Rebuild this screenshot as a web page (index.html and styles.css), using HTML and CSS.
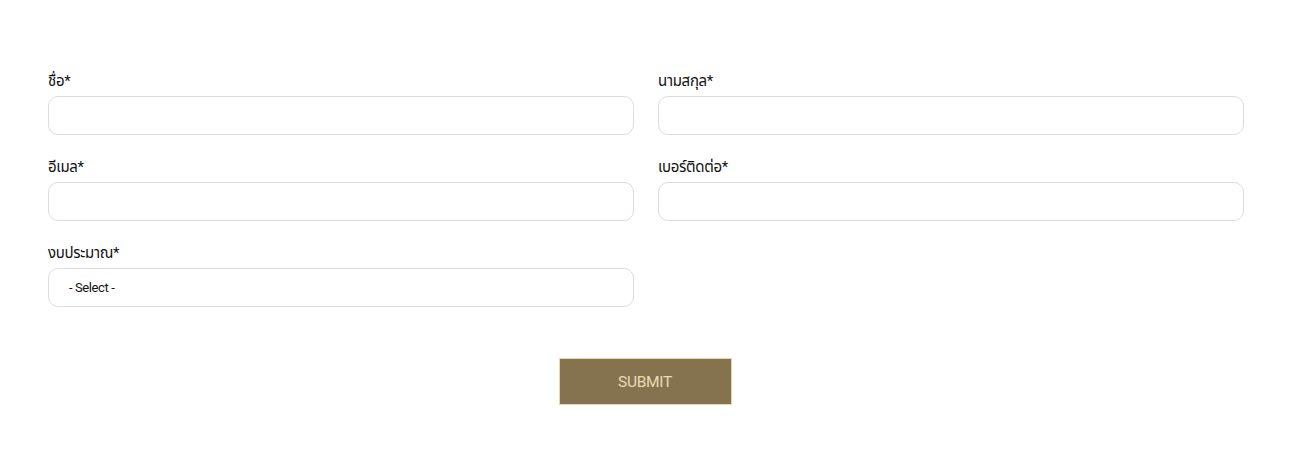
FILE: index.html
```html
<!DOCTYPE html>
<html lang="th">
<head>
<meta charset="utf-8">
<link rel="stylesheet" href="styles.css">
</head>
<body>
<form class="form">
  <div class="grid">
    <div class="field">
      <label class="label">ชื่อ*</label>
      <input class="input" type="text">
    </div>
    <div class="field">
      <label class="label">นามสกุล*</label>
      <input class="input" type="text">
    </div>
    <div class="field">
      <label class="label">อีเมล*</label>
      <input class="input" type="text">
    </div>
    <div class="field">
      <label class="label">เบอร์ติดต่อ*</label>
      <input class="input" type="text">
    </div>
    <div class="field">
      <label class="label">งบประมาณ*</label>
      <div class="select">- Select -</div>
    </div>
  </div>
  <div class="actions">
    <button class="submit" type="button">SUBMIT</button>
  </div>
</form>
</body>
</html>
```
FILE: styles.css
```css
html, body {
  margin: 0;
  padding: 0;
  background: #ffffff;
}
body {
  font-family: Roboto, "Noto Sans Thai", "Noto Sans", "DejaVu Sans", sans-serif;
  color: #111;
}
.form {
  padding: 68px 47px 0 48px;
}
.grid {
  display: grid;
  grid-template-columns: 1fr 1fr;
  column-gap: 24px;
  row-gap: 19px;
}
.field {
  display: flex;
  flex-direction: column;
  gap: 5px;
}
.label {
  font-size: 15px;
  line-height: 20px;
  height: 20px;
  padding-top: 3px;
  letter-spacing: -0.3px;
  color: #111;
}
.input, .select {
  box-sizing: border-box;
  height: 39px;
  width: 100%;
  border: 1px solid #dcdcdc;
  border-radius: 10px;
  background: #fff;
  margin: 0;
  padding: 0 20px;
  font-family: inherit;
}
.select {
  display: flex;
  align-items: center;
  font-size: 13px;
  letter-spacing: -0.4px;
  color: #111;
}
.actions {
  display: flex;
  justify-content: center;
  padding-top: 51px;
  padding-right: 2px;
}
.submit {
  width: 173px;
  height: 47px;
  background: #857350;
  border: 1px solid #e6d7b0;
  color: #eadbb4;
  font-family: Roboto, sans-serif;
  font-size: 15.5px;
  letter-spacing: -0.3px;
  margin: 0;
  padding: 0;
}
```
